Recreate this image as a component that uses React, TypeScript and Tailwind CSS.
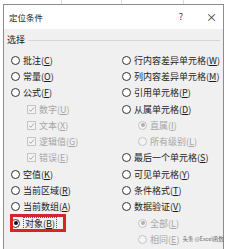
import React from 'react';

type Item = {
  label: string;
  hotkey: string;
  kind?: 'radio' | 'check';
  sub?: boolean;
  disabled?: boolean;
  checked?: boolean;
  focus?: boolean;
  mark?: string;
};

const leftItems: Item[] = [
  { label: '批注', hotkey: 'C' },
  { label: '常量', hotkey: 'O' },
  { label: '公式', hotkey: 'F' },
  { label: '数字', hotkey: 'U', kind: 'check', sub: true, disabled: true, checked: true },
  { label: '文本', hotkey: 'X', kind: 'check', sub: true, disabled: true, checked: true },
  { label: '逻辑值', hotkey: 'G', kind: 'check', sub: true, disabled: true, checked: true },
  { label: '错误', hotkey: 'E', kind: 'check', sub: true, disabled: true, checked: true },
  { label: '空值', hotkey: 'K' },
  { label: '当前区域', hotkey: 'R' },
  { label: '当前数组', hotkey: 'A' },
  { label: '对象', hotkey: 'B', checked: true, focus: true },
];

const rightItems: Item[] = [
  { label: '行内容差异单元格', hotkey: 'W' },
  { label: '列内容差异单元格', hotkey: 'M' },
  { label: '引用单元格', hotkey: 'P' },
  { label: '从属单元格', hotkey: 'D' },
  { label: '直属', hotkey: 'I', sub: true, disabled: true, checked: true },
  { label: '所有级别', hotkey: 'L', sub: true, disabled: true },
  { label: '最后一个单元格', hotkey: 'S' },
  { label: '可见单元格', hotkey: 'Y' },
  { label: '条件格式', hotkey: 'T' },
  { label: '数据验证', hotkey: 'V' },
  { label: '全部', hotkey: 'L', sub: true, disabled: true, checked: true },
  { label: '相同', hotkey: 'E', sub: true, disabled: true, mark: '头条 @Excel函数' },
];

const Radio = ({ item }: { item: Item }) => (
  <span
    className={`flex h-[9px] w-[9px] shrink-0 items-center justify-center rounded-full border ${
      item.disabled ? 'border-[#c4c4c4] bg-[#f4f4f4]' : 'border-[#333333] bg-white'
    }`}
  >
    {item.checked && (
      <span className={`h-[4px] w-[4px] rounded-full ${item.disabled ? 'bg-[#b0b0b0]' : 'bg-[#111111]'}`} />
    )}
  </span>
);

const Check = ({ item }: { item: Item }) => (
  <span className="flex h-[9px] w-[9px] shrink-0 items-center justify-center border border-[#c4c4c4] bg-[#f4f4f4]">
    {item.checked && (
      <svg width="7" height="7" viewBox="0 0 7 7" fill="none">
        <path d="M1 3.6 L2.8 5.3 L6 1.5" stroke="#a8a8a8" strokeWidth="1" />
      </svg>
    )}
  </span>
);

const Row = ({ item }: { item: Item }) => (
  <div className={`relative flex h-[16.3px] items-center gap-[3px] ${item.sub ? 'pl-[16px]' : ''}`}>
    {item.kind === 'check' ? <Check item={item} /> : <Radio item={item} />}
    <span
      className={`whitespace-nowrap leading-none ${item.disabled ? 'text-[#a6a6a6]' : 'text-[#1b1b1b]'} ${
        item.focus ? 'border border-dotted border-[#555555] px-[1px] py-[1px]' : ''
      }`}
    >
      {item.label}(<span className="underline">{item.hotkey}</span>)
    </span>
    {item.mark && (
      <span className="whitespace-nowrap text-[5.5px] leading-none text-[#6a6a6a]">{item.mark}</span>
    )}
    {item.focus && (
      <div className="absolute -top-[1px] -left-[1px] h-[18px] w-[56px] border-[3px] border-[#d4242e]" />
    )}
  </div>
);

export default function App() {
  return (
    <div
      className="flex h-[249px] w-[228px] flex-col overflow-hidden bg-white text-[9px]"
      style={{ fontFamily: '"Noto Sans CJK SC", "Noto Sans", sans-serif' }}
    >
      {/* sheet grid behind the dialog */}
      <div className="flex h-[4px] shrink-0">
        <div className="w-[62px] border-r border-[#dcdcdc]" />
        <div className="w-[60px] border-r border-[#dcdcdc]" />
        <div className="w-[62px] border-r border-[#dcdcdc]" />
        <div className="flex-1" />
      </div>
      <div className="ml-[3px] flex w-[221px] flex-1 flex-col border-t border-r border-l border-[#8c8c8c]">
        <div className="flex h-[24px] shrink-0 items-center bg-white pr-[7px] pl-[5px]">
          <span className="text-[8.5px] text-[#1b1b1b]">定位条件</span>
          <span className="ml-auto w-[10px] text-center text-[9px] text-[#333333]">?</span>
          <span className="ml-[20px] w-[10px] text-center text-[11px] leading-none text-[#333333]">×</span>
        </div>
        <div className="flex-1 bg-[#f0f0f0] px-[3px] pt-[5px]">
          <div className="flex h-[12px] items-center">
            <span className="text-[#1b1b1b]">选择</span>
            <div className="ml-[3px] h-px flex-1 bg-[#d6d6d6]" />
          </div>
          <div className="mt-[6px] grid grid-cols-[111px_1fr] pl-[4px]">
            <div className="flex flex-col">
              {leftItems.map((item) => (
                <Row key={item.label} item={item} />
              ))}
            </div>
            <div className="flex flex-col">
              {rightItems.map((item) => (
                <Row key={item.label} item={item} />
              ))}
            </div>
          </div>
        </div>
      </div>
    </div>
  );
}
